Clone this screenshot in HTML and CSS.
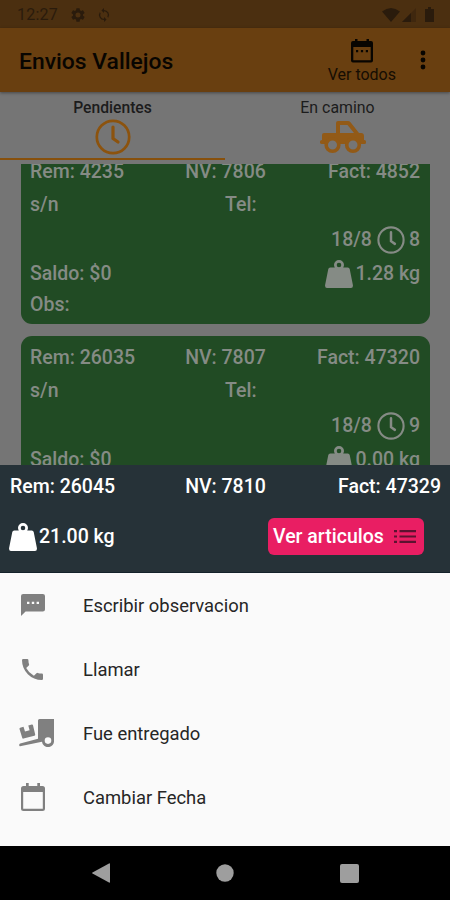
FILE: index.html
```
<!DOCTYPE html>
<html lang="es">
<head>
  <meta charset="UTF-8">
  <title>Envios Vallejos</title>
  <link rel="stylesheet" href="styles.css">
</head>
<body>
  <!-- shared icons -->
  <svg class="defs">
    <symbol id="clock" viewBox="0 0 36 36">
      <circle cx="18" cy="18" r="16.2" fill="none" stroke="currentColor" stroke-width="2.7"/>
      <path d="M18 8v11.5l5 3.5" fill="none" stroke="currentColor" stroke-width="3.2" stroke-linecap="round"/>
    </symbol>
    <symbol id="weight" viewBox="0 0 28 28">
      <path fill="currentColor" fill-rule="evenodd" d="M9.8 7.5A5 5 0 0 1 9 5a5 5 0 0 1 10 0 5 5 0 0 1-.8 2.500h4.600q1.500 0 1.900 1.500l3.200 16q.4 3-1.900 3H2q-2.300 0-1.900-3L3.300 9q.4-1.500 1.900-1.500zM14 2.700a2.300 2.300 0 1 0 0 4.600 2.300 2.300 0 0 0 0-4.600z"/>
    </symbol>
  </svg>

  <div class="status-bar">
    <span class="time">12:27</span>
    <svg width="14" height="14" viewBox="2 2 20 20"><path fill="currentColor" d="M19.140 12.940c.04-.3.06-.61.06-.94s-.02-.64-.07-.94l2.030-1.580a.5.5 0 0 0 .12-.61l-1.920-3.320a.5.5 0 0 0-.59-.22l-2.390.96a7 7 0 0 0-1.620-.94l-.36-2.540a.5.5 0 0 0-.48-.41h-3.840a.5.5 0 0 0-.47.41l-.36 2.540a7.300 7.300 0 0 0-1.620.94l-2.390-.96a.5.5 0 0 0-.59.22L2.740 8.870a.5.5 0 0 0 .12.610l2.030 1.580a6 6 0 0 0 0 1.880l-2.030 1.580a.5.5 0 0 0-.12.610l1.920 3.320c.12.22.37.29.59.22l2.390-.96c.5.38 1.030.7 1.620.94l.36 2.540c.05.24.24.41.48.41h3.840c.24 0 .44-.17.47-.41l.36-2.540a7 7 0 0 0 1.620-.94l2.390.96c.22.08.47 0 .59-.22l1.920-3.320a.5.5 0 0 0-.12-.61zM12 15.600a3.600 3.600 0 1 1 0-7.200 3.600 3.600 0 0 1 0 7.200z"/></svg>
    <svg class="sync" width="14" height="14" viewBox="2 1 20 22"><path fill="currentColor" d="M12 4V1L8 5l4 4V6a6 6 0 0 1 5.240 8.800l1.460 1.460A8 8 0 0 0 12 4zm0 14a6 6 0 0 1-5.240-8.800L5.300 7.740A8 8 0 0 0 12 20v3l4-4-4-4z"/></svg>
    <span class="spacer"></span>
    <svg width="18" height="14" viewBox="0 0 18 14"><path fill="currentColor" d="M0 3.500Q9-3.500 18 3.500L9 14z"/></svg>
    <svg class="signal" width="14" height="14" viewBox="0 0 14 14"><path fill="currentColor" opacity=".35" d="M14 0v14H0z"/><path fill="currentColor" d="M9 5v9H0z"/></svg>
    <svg class="battery" width="9" height="15" viewBox="0 0 9 15"><path fill="currentColor" d="M3 0h3v2h3v13H0V2h3z"/></svg>
  </div>

  <header class="app-bar">
    <h1>Envios Vallejos</h1>
    <div class="see-all">
      <svg width="22" height="24" viewBox="0 0 22 24"><path fill="currentColor" fill-rule="evenodd" d="M4 0h2.500v2h9V0H18v2h2q2 0 2 2v17.500q0 2-2 2H2q-2 0-2-2V4q0-2 2-2h2zM2.300 8v13.200h17.400V8zM5 11h2.200v2.200H5zm4.900 0h2.200v2.200H9.900zm4.900 0H17v2.200h-2.200z"/></svg>
      <span>Ver todos</span>
    </div>
    <svg class="more" width="6" height="20" viewBox="0 0 6 20"><g fill="currentColor"><circle cx="3" cy="3" r="2.400"/><circle cx="3" cy="10" r="2.400"/><circle cx="3" cy="17" r="2.400"/></g></svg>
  </header>

  <nav class="tabs">
    <div class="tab active">
      <span>Pendientes</span>
      <svg width="36" height="36"><use href="#clock"/></svg>
    </div>
    <div class="tab">
      <span>En camino</span>
      <svg class="truck" width="46" height="33" viewBox="0 0 46 33"><path fill="currentColor" fill-rule="evenodd" d="M16 12V2q0-2 2-2h10q1.500 0 2.500 1.200L39 12h2q3 0 3 3v4h.5q1.500 0 1.500 1.500v1q0 1.500-1.500 1.500H2q-2 0-2-1.500v-1Q0 19 2 19v-5q0-2 2-2zM20 4v8h14l-6.500-8z"/><g class="wheel"><circle cx="12.500" cy="24" r="6.300"/><circle cx="33" cy="24" r="6.300"/></g></svg>
    </div>
  </nav>

  <main class="list">
    <section class="card first">
      <div class="row thirds"><span>Rem: 4235</span><span>NV: 7806</span><span>Fact: 4852</span></div>
      <div class="row halves"><span>s/n</span><span>Tel:</span></div>
      <div class="row end"><span>18/8</span><svg class="hour" width="28" height="28"><use href="#clock"/></svg><span>8</span></div>
      <div class="row"><span>Saldo: $0</span><span class="kilos"><svg width="28" height="28"><use href="#weight"/></svg>1.28 kg</span></div>
      <div class="row"><span>Obs:</span></div>
    </section>
    <section class="card">
      <div class="row thirds"><span>Rem: 26035</span><span>NV: 7807</span><span>Fact: 47320</span></div>
      <div class="row halves"><span>s/n</span><span>Tel:</span></div>
      <div class="row end"><span>18/8</span><svg class="hour" width="28" height="28"><use href="#clock"/></svg><span>9</span></div>
      <div class="row"><span>Saldo: $0</span><span class="kilos"><svg width="28" height="28"><use href="#weight"/></svg>0.00 kg</span></div>
    </section>
  </main>

  <section class="sheet">
    <div class="sheet-head">
      <div class="row thirds"><span>Rem: 26045</span><span>NV: 7810</span><span>Fact: 47329</span></div>
      <div class="row actions">
        <span class="kilos"><svg width="28" height="28"><use href="#weight"/></svg>21.00 kg</span>
        <button class="articles">Ver articulos
          <svg width="22" height="13" viewBox="0 0 22 13"><path fill="currentColor" d="M0 0h3v2.200H0zM5.500 0H22v2.200H5.500zM0 5.400h3v2.200H0zM5.500 5.400H22v2.200H5.500zM0 10.800h3V13H0zM5.500 10.800H22V13H5.500z"/></svg>
        </button>
      </div>
    </div>
    <ul class="menu">
      <li>
        <span class="icon"><svg width="24" height="22" viewBox="0 0 24 23" preserveAspectRatio="none"><path fill="currentColor" fill-rule="evenodd" d="M2.200 0h19.600Q24 0 24 2.200v14q0 2.200-2.200 2.200H4.600L0 23V2.200Q0 0 2.200 0zM6 8v2.400h2.400V8zm4.800 0v2.400h2.400V8zm4.800 0v2.400H18V8z"/></svg></span>
        Escribir observacion
      </li>
      <li>
        <span class="icon phone"><svg width="21" height="21" viewBox="3 3 18 18"><path fill="currentColor" d="M6.620 10.790a15.150 15.150 0 0 0 6.590 6.590l2.200-2.200a1 1 0 0 1 1.020-.24 11.400 11.400 0 0 0 3.570.57 1 1 0 0 1 1 1V20a1 1 0 0 1-1 1A17 17 0 0 1 3 4a1 1 0 0 1 1-1h3.500a1 1 0 0 1 1 1c0 1.250.2 2.450.57 3.570a1 1 0 0 1-.25 1.020z"/></svg></span>
        Llamar
      </li>
      <li>
        <span class="icon wide"><svg width="35" height="28" viewBox="0 0 35 28"><path fill="currentColor" fill-rule="evenodd" d="M20.500 0H35v21.500a6 6 0 0 1-12 1.200L1 27.300q-.8-.2-.8-1.400t1-1.500L19 19.800V1.500Q19 0 20.500 0zM29 18.300a3.300 3.300 0 1 0 0 6.600 3.300 3.300 0 0 0 0-6.600z"/><path fill="currentColor" d="M1.200 8.700 4.500 7.800 6 12.500l4.600-1.200L9.300 6.500l3.500-1q1-.2 1.200.7l2.200 9.300q.2 1-.8 1.300L4.500 19.600q-1 .2-1.300-.8L.5 10q-.2-1 .7-1.300z"/></svg></span>
        Fue entregado
      </li>
      <li>
        <span class="icon"><svg width="24" height="28" viewBox="0 0 24 28"><path fill="currentColor" fill-rule="evenodd" d="M5 0h2.700v3h8.600V0H19v3h2.500Q24 3 24 5.500v20q0 2.500-2.500 2.500h-19Q0 28 0 25.500v-20Q0 3 2.500 3H5zM2.200 9v16.800h19.600V9z"/></svg></span>
        Cambiar Fecha
      </li>
    </ul>
  </section>

  <footer class="nav-bar">
    <svg width="18" height="20" viewBox="0 0 18 20"><path fill="currentColor" d="M18 1v18q0 1-1 .5L.5 10.500q-.8-.5 0-1L17 .5q1-.5 1 .5z"/></svg>
    <svg width="18" height="18" viewBox="0 0 18 18"><circle cx="9" cy="9" r="8.700" fill="currentColor"/></svg>
    <svg width="19" height="19" viewBox="0 0 19 19"><rect width="19" height="19" rx="2" fill="currentColor"/></svg>
  </footer>
</body>
</html>
```
FILE: styles.css
```
* {
  box-sizing: border-box;
}
body {
  margin: 0;
  width: 450px;
  height: 900px;
  overflow: hidden;
  display: flex;
  flex-direction: column;
  background: #757575;
  font-family: Roboto, "Liberation Sans", sans-serif;
}
svg {
  display: block;
  flex: none;
}
.defs {
  position: absolute;
  width: 0;
  height: 0;
}

/* top bars */
.status-bar {
  height: 28px;
  flex: none;
  display: flex;
  align-items: center;
  padding: 1px 16px 0 17px;
  background: #4b2f10;
  color: #2a1b0c;
}
.time {
  width: 54px;
  font-size: 16px;
  letter-spacing: 0.2px;
}
.sync {
  margin-left: 12px;
}
.spacer {
  flex: 1;
}
.signal {
  margin-left: 2px;
}
.battery {
  margin-left: 9px;
}
.app-bar {
  height: 64px;
  flex: none;
  display: flex;
  align-items: center;
  padding: 0 25px 0 19px;
  background: #693f10;
  color: #080501;
  box-shadow: 0 1px 3px rgba(0, 0, 0, 0.4);
  z-index: 1;
}
.app-bar h1 {
  flex: 1;
  margin: 2px 0 0;
  font-size: 22.9px;
  font-weight: 500;
}
.see-all {
  display: flex;
  flex-direction: column;
  align-items: center;
  gap: 2px;
  margin-top: 3px;
  font-size: 16px;
  line-height: 20px;
  color: #150d03;
}
.see-all svg {
  color: #080501;
}
.more {
  margin-left: 24px;
  margin-right: -1px;
}

.tabs {
  height: 68px;
  flex: none;
  display: flex;
}
.tab {
  flex: 1;
  display: flex;
  flex-direction: column;
  align-items: center;
  padding-top: 7px;
  font-size: 15.9px;
  line-height: 18px;
  color: #1c1c1c;
}
.tab.active {
  border-bottom: 2px solid #87500c;
  font-size: 15.7px;
  font-weight: 500;
}
.tab svg {
  margin-top: 2px;
  color: #8c530e;
}
.tab .truck {
  margin: 4px 0 0 10px;
  overflow: visible;
  color: #925a17;
}
.wheel {
  fill: #757575;
  stroke: currentColor;
  stroke-width: 3.6;
}

/* deliveries */
.list {
  height: 301px;
  flex: none;
  margin-top: 4px;
  padding: 0 20px 0 21px;
  overflow: hidden;
}
.card {
  height: 174px;
  margin-bottom: 12px;
  padding: 6px 10px 6px 9px;
  display: grid;
  grid-template-rows: 30px 36px 34px 34px 28px;
  border-radius: 11px;
  background: #214b24;
  color: #858b85;
}
/* scrolled partly under the tabs */
.card.first {
  margin-top: -14px;
}
.row {
  display: flex;
  align-items: center;
  justify-content: space-between;
  font-size: 19.5px;
  font-weight: 500;
  white-space: nowrap;
}
.thirds,
.halves {
  display: grid;
  grid-template-columns: 1fr auto 1fr;
}
.thirds span:last-child {
  text-align: right;
}
.halves {
  grid-template-columns: 1fr 1fr;
}
.card .thirds span:nth-child(2) {
  padding-left: 1px;
}
.row.end {
  justify-content: flex-end;
}
.hour {
  margin: 1px 4px 0 5px;
}
.kilos {
  display: flex;
  align-items: center;
  gap: 2px;
}
.card .kilos svg {
  margin-top: 2px;
}

/* selected delivery */
.sheet {
  height: 381px;
  flex: none;
  background: #fafafa;
}
.sheet-head {
  height: 108px;
  padding: 6px 9px 0 10px;
  background: #263238;
  border-bottom: 1px solid #14222b;
  color: #fff;
}
.sheet-head .thirds {
  height: 30px;
}
.actions {
  height: 71px;
  padding-right: 17px;
}
.actions .kilos {
  margin-left: -1px;
}
.articles {
  width: 156px;
  height: 37px;
  display: flex;
  align-items: center;
  justify-content: space-between;
  padding: 0 8px 0 5px;
  border: 0;
  border-radius: 6px;
  background: #e91e63;
  color: #fff;
  font: inherit;
}
.articles svg {
  color: #5c1230;
}
.menu {
  list-style: none;
  margin: 0;
  padding: 0 20px;
}
.menu li {
  height: 64.1px;
  display: flex;
  align-items: center;
  font-size: 18.4px;
  color: #262626;
}
.icon {
  width: 63px;
  padding-left: 1px;
  color: #808080;
}
.icon.phone {
  padding-left: 2px;
}
.icon.wide {
  padding-left: 0;
  margin-left: -1px;
  width: 64px;
}

.nav-bar {
  height: 54px;
  flex: none;
  display: flex;
  align-items: center;
  justify-content: space-between;
  padding: 0 91px 0 92px;
  background: #000;
  color: #9e9e9e;
}
```
